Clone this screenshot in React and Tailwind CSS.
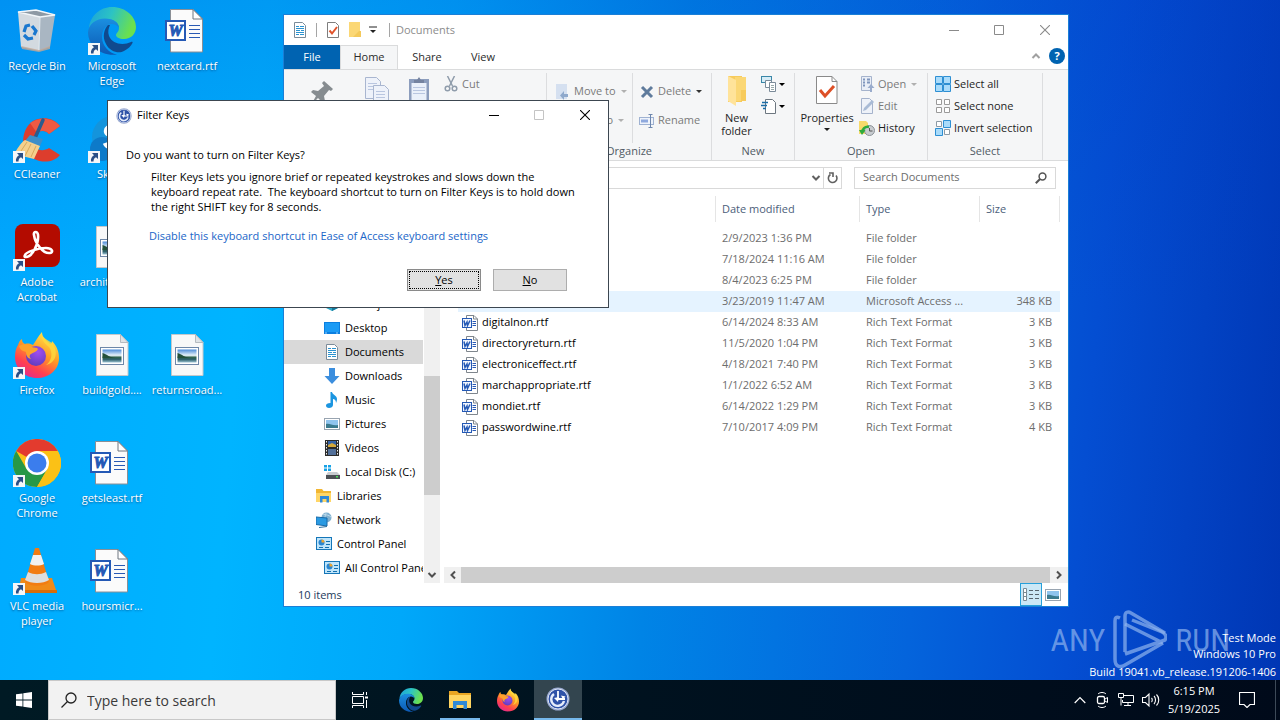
import { useState } from "react";

// ---------- data ----------

const DESKTOP_ITEMS = [
  { name: "Recycle Bin", icon: "recycle", place: "col-start-1 row-start-1" },
  { name: "CCleaner", icon: "ccleaner", place: "col-start-1 row-start-2", shortcut: true },
  { name: "Adobe Acrobat", icon: "acrobat", place: "col-start-1 row-start-3", shortcut: true },
  { name: "Firefox", icon: "firefox", place: "col-start-1 row-start-4", shortcut: true },
  { name: "Google Chrome", icon: "chrome", place: "col-start-1 row-start-5", shortcut: true },
  { name: "VLC media player", icon: "vlc", place: "col-start-1 row-start-6", shortcut: true },
  { name: "Microsoft Edge", icon: "edge", place: "col-start-2 row-start-1", shortcut: true },
  { name: "Skype", icon: "skype", place: "col-start-2 row-start-2", shortcut: true },
  { name: "architectur...", icon: "picture", place: "col-start-2 row-start-3" },
  { name: "buildgold....", icon: "picture", place: "col-start-2 row-start-4" },
  { name: "getsleast.rtf", icon: "word", place: "col-start-2 row-start-5" },
  { name: "hoursmicr...", icon: "word", place: "col-start-2 row-start-6" },
  { name: "nextcard.rtf", icon: "word", place: "col-start-3 row-start-1" },
  { name: "returnsroad...", icon: "picture", place: "col-start-3 row-start-4" },
];

const NAV_ITEMS = [
  { name: "3D Objects", icon: "cube", deep: true },
  { name: "Desktop", icon: "desktop", deep: true },
  { name: "Documents", icon: "document", deep: true },
  { name: "Downloads", icon: "download", deep: true },
  { name: "Music", icon: "music", deep: true },
  { name: "Pictures", icon: "photo", deep: true },
  { name: "Videos", icon: "video", deep: true },
  { name: "Local Disk (C:)", icon: "disk", deep: true },
  { name: "Libraries", icon: "library" },
  { name: "Network", icon: "network" },
  { name: "Control Panel", icon: "panel" },
  { name: "All Control Panel Items", icon: "panel", deep: true },
];

const FILES = [
  { name: "", date: "2/9/2023 1:36 PM", type: "File folder", size: "" },
  { name: "", date: "7/18/2024 11:16 AM", type: "File folder", size: "" },
  { name: "", date: "8/4/2023 6:25 PM", type: "File folder", size: "" },
  { name: "", date: "3/23/2019 11:47 AM", type: "Microsoft Access ...", size: "348 KB", hover: true },
  { name: "digitalnon.rtf", date: "6/14/2024 8:33 AM", type: "Rich Text Format", size: "3 KB" },
  { name: "directoryreturn.rtf", date: "11/5/2020 1:04 PM", type: "Rich Text Format", size: "3 KB" },
  { name: "electroniceffect.rtf", date: "4/18/2021 7:40 PM", type: "Rich Text Format", size: "3 KB" },
  { name: "marchappropriate.rtf", date: "1/1/2022 6:52 AM", type: "Rich Text Format", size: "3 KB" },
  { name: "mondiet.rtf", date: "6/14/2022 1:29 PM", type: "Rich Text Format", size: "3 KB" },
  { name: "passwordwine.rtf", date: "7/10/2017 4:09 PM", type: "Rich Text Format", size: "4 KB" },
];

// ---------- app icons ----------

function EdgeIcon({ className }) {
  return (
    <svg viewBox="0 0 48 48" className={className}>
      <defs>
        <linearGradient id="edgeTop" x1="0" y1="0" x2="1" y2="0.3">
          <stop offset="0" stopColor="#1aa0dc" />
          <stop offset="0.5" stopColor="#2cc3c4" />
          <stop offset="1" stopColor="#6be04e" />
        </linearGradient>
        <linearGradient id="edgeLeft" x1="0" y1="0" x2="0" y2="1">
          <stop offset="0" stopColor="#1b8fe0" />
          <stop offset="1" stopColor="#0c59b4" />
        </linearGradient>
      </defs>
      <path d="M1 21C2 9 12 0 24 0c14 0 24 10 24 20 0 7-5 12-12 12-5 0-8-2-8-4s3-3 3-7c0-5-5-9-12-9C11 12 4 15 1 21z" fill="url(#edgeTop)" />
      <path d="M0 25C1 17 8 11.500 17 11.500c8 0 14 4 14 9.500-1-2-4-4-7-4-6 0-10 6-10 13 0 9 7 16 15 17.500C13 49.500 0 39 0 25z" fill="url(#edgeLeft)" />
      <path d="M20 18c-4 4-6 12-2 19 4 8 13 10 18 7 4-2 7-5 8.500-8 .5-1-.5-1.500-1.500-1-8 4-19 2-22-6-1.500-4-.5-8 1-11z" fill="#104a8e" />
    </svg>
  );
}

function FirefoxIcon({ className }) {
  return (
    <svg viewBox="0 0 48 48" className={className}>
      <defs>
        <linearGradient id="foxBody" x1="0.8" y1="0.1" x2="0.3" y2="1">
          <stop offset="0" stopColor="#ffe34a" />
          <stop offset="0.4" stopColor="#ff9a24" />
          <stop offset="0.75" stopColor="#ff4050" />
          <stop offset="1" stopColor="#e32b8c" />
        </linearGradient>
        <radialGradient id="foxGlobe" cx="0.6" cy="0.3" r="0.8">
          <stop offset="0" stopColor="#a14df0" />
          <stop offset="1" stopColor="#5a3bb8" />
        </radialGradient>
      </defs>
      <path d="M9 8c0 3 1 4 3 5 3-1 6 0 8 1 3-4 5-9 9-13 0 5 4 8 8 12 1 0 2-1 2-3 5 5 7 11 7 17 0 12-10 20-22 20S2 38 2 26c0-5 1-9 3-12 1-3 2-5 4-6z" fill="url(#foxBody)" />
      <circle cx="23" cy="25" r="10" fill="url(#foxGlobe)" />
      <path d="M6 15c5-3 9-2 13 1 2 1 5 0 6 2-1 3-7 4-8 6-1 1 0 3 1 4-4-1-5-4-5-7-3-1-6-2-7-6z" fill="#ffa22b" />
      <path d="M28 3c0 5 3 9 8 13 4 5 3 14-3 18 10-2 13-13 6-22-4-3-9-5-11-9z" fill="#ffd93d" opacity=".8" />
    </svg>
  );
}

function FilterKeysIcon({ className }) {
  return (
    <svg viewBox="0 0 24 24" className={className}>
      <circle cx="12" cy="12" r="11.500" fill="#98a8cf" />
      <circle cx="12" cy="12" r="10" fill="#2f52a8" stroke="#dde5f5" strokeWidth="1" />
      <path d="M8 7a6.500 6.500 0 1 0 10 7" fill="none" stroke="#e6edfb" strokeWidth="2.400" />
      <path d="M12 4v8h7" fill="none" stroke="#fff" strokeWidth="1.800" />
      <path d="M8 11l4 4 1-5z" fill="#fff" />
      <path d="M15 8.500l4.500 1-2.500 3z" fill="#fff" />
    </svg>
  );
}

function WordPage() {
  return (
    <svg viewBox="0 0 48 48" className="size-12">
      <path d="M7.500 2.500H30l9.500 9.500v33h-32z" fill="#fbfbfb" stroke="#8a8f96" />
      <path d="M30 2.500V12h9.500z" fill="#fff" stroke="#6f7680" />
      <path d="M26 18.500h11M26 22.500h11M26 26.500h11M26 30.500h11" stroke="#2a5ab4" />
      <rect x="2" y="13" width="21" height="21" fill="#2459b5" />
      <rect x="4" y="15" width="17" height="17" fill="#fff" />
      <text x="12.500" y="29" textAnchor="middle" fontFamily="Liberation Serif, serif" fontStyle="italic" fontWeight="700" fontSize="16" fill="#2459b5" stroke="#2459b5" strokeWidth="1">W</text>
    </svg>
  );
}

function PicturePage() {
  return (
    <svg viewBox="0 0 48 48" className="size-12">
      <defs>
        <linearGradient id="lake" x1="0" y1="0" x2="0" y2="1">
          <stop offset="0" stopColor="#4a8ad8" />
          <stop offset="0.45" stopColor="#e8f3fa" />
          <stop offset="0.6" stopColor="#33664f" />
          <stop offset="0.75" stopColor="#285a64" />
          <stop offset="1" stopColor="#9cc3d4" />
        </linearGradient>
      </defs>
      <path d="M8.500 3.500h24l7.500 8v33H8.500z" fill="#f8f8f8" stroke="#c3c8cc" />
      <path d="M32.500 3.500v8H40z" fill="#dfe3e6" stroke="#b5babf" />
      <rect x="12.500" y="16.500" width="23" height="17" fill="#fff" stroke="#6e87a8" />
      <rect x="14.500" y="18.500" width="19" height="13" fill="url(#lake)" />
      <path d="M14.500 22c4 1 8 5 13 5h-13z" fill="#23503a" />
    </svg>
  );
}

function AppIcon({ name }) {
  switch (name) {
    case "edge":
      return <EdgeIcon className="size-12" />;
    case "firefox":
      return <FirefoxIcon className="size-12" />;
    case "word":
      return <WordPage />;
    case "picture":
      return <PicturePage />;
    case "recycle":
      return (
        <svg viewBox="0 0 48 48" className="size-12">
          <path d="M5 5l18-2 20 5-17 2z" fill="#8d99a4" />
          <path d="M5 5l22 5-1 34-18-4z" fill="#d3dae0" />
          <path d="M27 10l15-2-5 32-11 4z" fill="#a9b6c2" />
          <path d="M5 5l18-2 19 5-15 2z" fill="none" stroke="#f2f6f9" strokeWidth="1.500" />
          <path d="M8 39l18 4 11-4v3l-11 3-17-3z" fill="#c6a894" opacity=".8" />
          <path d="M27 10l-1 33" stroke="#e8edf1" />
          <g fill="none" stroke="#1a78cf" strokeWidth="3.200">
            <path d="M11 25l2-6 4-1" />
            <path d="M19 19l4 5-2 4" />
            <path d="M20 31l-5 1-4-4" />
          </g>
        </svg>
      );
    case "ccleaner":
      return (
        <svg viewBox="0 0 48 48" className="size-12">
          <path d="M47 11L36 19c-3-4-11-4-14 1-3 4-3 9 0 12 3 4 10 4 14 1l11 7c-8 10-26 8-33-2C7 28 10 13 20 6c9-5 21-3 27 5z" fill="#dd3d2d" />
          <path d="M47 11L36 19c-3-4-9-4-12-1L17 8C27 1 41 3 47 11z" fill="#ef5a43" />
          <path d="M30 5l-8 18" stroke="#2a5c8e" strokeWidth="3.500" strokeLinecap="round" />
          <path d="M17 20l13 4-3 7-15-5z" fill="#3d8fc9" />
          <path d="M12 25l15 6-6 13-20-5c3-4 6-11 11-14z" fill="#f4d08d" />
          <path d="M14 27l-8 12M18 29l-6 12M23 31l-5 11" stroke="#d9a95c" />
        </svg>
      );
    case "acrobat":
      return (
        <svg viewBox="0 0 48 48" className="size-12">
          <rect x="2" y="1" width="45" height="43" rx="8" fill="#b30b00" />
          <path d="M13 34c6 0 13-13 12-22 0-4-5-4-4 0 1 8 9 19 16 18 4-1 2-5-4-5-8 0-20 4-21 7-1 2 0 2 1 2z" fill="none" stroke="#fff" strokeWidth="2.600" />
        </svg>
      );
    case "chrome":
      return (
        <svg viewBox="0 0 48 48" className="size-12">
          <circle cx="24" cy="24" r="24" fill="#fbc116" />
          <path d="M24 24L3.200 12A24 24 0 0 1 44.800 12z" fill="#e33b2e" />
          <path d="M3.200 12A24 24 0 0 0 24 48l10.400-18L24 24l-10.400 6z" fill="#279847" />
          <path d="M24 12h20.800A24 24 0 0 1 24 48l10.400-18z" fill="#fbc116" />
          <circle cx="24" cy="24" r="12" fill="#fff" />
          <circle cx="24" cy="24" r="9.500" fill="#3b7ded" />
        </svg>
      );
    case "vlc":
      return (
        <svg viewBox="0 0 48 48" className="size-12">
          <path d="M8 31h31l5 15H5z" fill="#f08a18" />
          <path d="M5 43h39v3H5z" fill="#d86d07" />
          <path d="M22 1h4l10 34c-5 5-19 5-24 0z" fill="#f27c12" />
          <path d="M20 8h8l3 9c-4 2-10 2-14 0z" fill="#f1f1f1" />
          <path d="M15 25c6 3 12 3 18 0l3 8c-6 4-18 4-24 0z" fill="#dedede" />
        </svg>
      );
    default:
      return (
        <svg viewBox="0 0 48 48" className="size-12">
          <circle cx="25" cy="22" r="21" fill="#1494dc" />
          <circle cx="14" cy="34" r="12" fill="#0d7ac9" />
          <path d="M32 15c-2-5-14-5-14 1s14 5 14 11-13 7-15 1" fill="none" stroke="#fff" strokeWidth="4.500" />
        </svg>
      );
  }
}

function ShortcutArrow() {
  return (
    <svg viewBox="0 0 12 12" className="absolute bottom-0 left-0 size-3">
      <rect width="12" height="12" fill="#f4f6f8" />
      <path d="M4 2h6v6L8 6.200C6 7 5.500 8.500 5.500 10.500H3C2.500 7.500 4 5.500 6 4.200z" fill="#2b4f86" />
    </svg>
  );
}

// ---------- small explorer icons ----------

function SmallIcon({ name }) {
  const shapes = {
    cube: (
      <>
        <path d="M8 1l7 3.500v7L8 15l-7-3.500v-7z" fill="#2fa9c9" />
        <path d="M8 8l7-3.500v7L8 15z" fill="#15799b" />
      </>
    ),
    desktop: (
      <>
        <rect x="0" y="2" width="16" height="12" fill="#0b7fe0" />
        <rect x="1" y="3" width="14" height="9" fill="#1b9bf5" />
        <path d="M1 13h14" stroke="#9cd4ff" strokeDasharray="2 9" />
      </>
    ),
    document: (
      <>
        <path d="M2.500.5h8l3 3v12h-11z" fill="#fff" stroke="#7b8b99" />
        <path d="M4 4.500h3M8 4.500h4M4 6.500h8M4 8.500h4M9 8.500h3M4 10.500h8M4 12.500h3M8 12.500h4" stroke="#2a93d0" />
      </>
    ),
    download: <path d="M5 0h6v8h4.500L8 16 .5 8H5z" fill="#3b8ede" />,
    music: <path d="M8 0c.5 3 5 3.500 5 7 0 1.500-.5 3-1 4 0-3-1.500-4-3-4v6c0 2-2 3-4 3s-3-1-3-2.500S3.500 11 6.500 11V0z" fill="#1b95e0" />,
    photo: (
      <>
        <rect x=".5" y="2.500" width="15" height="11" fill="#fff" stroke="#98a4b0" />
        <rect x="2" y="4" width="12" height="8" fill="#8fc4ee" />
        <path d="M2 8c4-1 6 2 12 1v3H2z" fill="#3a7a8e" />
      </>
    ),
    video: (
      <>
        <rect x="1" y="0" width="14" height="16" fill="#2b2b2b" />
        <path d="M2.500 1v14M13.500 1v14" stroke="#f0f0f0" strokeDasharray="1.500 1.500" />
        <rect x="4" y="1" width="8" height="6" fill="#3463a8" />
        <rect x="4" y="9" width="8" height="6" fill="#52709a" />
        <path d="M4 5l4-2 4 2v2H4z" fill="#d5a93a" />
      </>
    ),
    disk: (
      <>
        <path d="M0 1h3v2.500H0zM4 1h3v2.500H4zM0 4.500h3V7H0zM4 4.500h3V7H4z" fill="#17a2e6" />
        <path d="M4 8h9l3 3H2z" fill="#c8ccd0" />
        <rect x="2" y="11" width="14" height="4" fill="#4b5055" />
        <rect x="12" y="12" width="2" height="1.500" fill="#4be05b" />
      </>
    ),
    library: (
      <>
        <path d="M0 1h6l1.500 2H15v11H0z" fill="#f2b632" />
        <path d="M0 5h15v9H0z" fill="#ffd667" />
        <path d="M4 8h9v6.500h-2.500V11h-4v3.500H4z" fill="#2f88d8" />
      </>
    ),
    network: (
      <>
        <circle cx="10.500" cy="5.500" r="5" fill="#7fb0d0" />
        <path d="M7 2c3 1 6 1 8 3M10.500.5c-2 3-2 7 0 10" fill="none" stroke="#bcd9ea" />
        <path d="M0 5l11 1v8L0 12.500z" fill="#2a9ae2" stroke="#1769a8" />
        <path d="M3 15.500l8-1" stroke="#2f6f9d" />
      </>
    ),
    panel: (
      <>
        <rect x=".5" y="1.500" width="15" height="12" fill="#bfe5fb" stroke="#1576b8" />
        <circle cx="5.500" cy="6.500" r="3" fill="#2a86d1" />
        <path d="M5.500 6.500V3.500a3 3 0 0 1 3 3z" fill="#f1a52d" />
        <path d="M10 5.500h4M10 8.500h4M3 11.500h4M9 11.500h4" stroke="#1270af" />
      </>
    ),
    rtf: (
      <>
        <path d="M4.500.5h7.500l3.500 3.500v11.500h-11z" fill="#fff" stroke="#7f868d" />
        <path d="M11.500.5V4h4" fill="none" stroke="#7f868d" />
        <path d="M10.500 6.500H14M10.500 8.500H14M10.500 10.500H14" stroke="#2a5ab4" />
        <rect x="0" y="3" width="10" height="10" fill="#2459b5" />
        <rect x="1" y="4" width="8" height="8" fill="#f2f6fd" />
        <path d="M2 5.500l1 5L5 7l.5 3.500L8 5.500" fill="none" stroke="#2459b5" strokeWidth="1.500" />
      </>
    ),
    check: (
      <>
        <path d="M2.500.5h8l3 3v12h-11z" fill="#fff" stroke="#7e7e7e" />
        <path d="M4.500 8.500l2.500 3 5-6.500" fill="none" stroke="#e0532b" strokeWidth="2" />
      </>
    ),
    folder: (
      <>
        <path d="M2 0h11v15H2z" fill="#fbd775" />
        <path d="M12 9h2v6H6z" fill="#f4c95a" />
      </>
    ),
    cut: (
      <g fill="none" stroke="#8f9cab" strokeWidth="1.500">
        <path d="M4.500 0l5 10M11.500 0l-5 10" />
        <circle cx="4.500" cy="12.500" r="2.300" />
        <circle cx="11.500" cy="12.500" r="2.300" />
      </g>
    ),
    move: (
      <>
        <rect x="1" y="0" width="11" height="15" fill="#d5e0f0" />
        <path d="M13 10H9V7l-4 4.500L9 16v-3h4z" fill="#8fa9cc" />
      </>
    ),
    remove: <path d="M3 3l10 10M13 3L3 13" stroke="#5f7b9c" strokeWidth="3" />,
    rename: (
      <>
        <rect x=".5" y="4.500" width="14" height="7" fill="#eef3fb" stroke="#9fb2d2" />
        <rect x="2" y="6.500" width="7" height="3" fill="#8fa9dd" />
        <path d="M11.500 2v12M9.500 1.500h4M9.500 14.500h4" stroke="#6d86ad" />
      </>
    ),
    open: (
      <>
        <path d="M2.500.5h10v14h-10z" fill="#e9eef7" stroke="#a5b3cc" />
        <path d="M4 3.500h2M4 6.500h2M4 9.500h2M8 3.500h3M8 6.500h3" stroke="#7f95bd" strokeWidth="2" />
        <path d="M11 16v-4H8.500L12 8l3.500 4H13v4z" fill="#9aaccc" />
      </>
    ),
    edit: (
      <>
        <path d="M2.500.5h8l3 3v12h-11z" fill="#eef2f9" stroke="#a5b3cc" />
        <path d="M4 13l1-3 8-8 2 2-8 8z" fill="#a9bbd6" />
      </>
    ),
    history: (
      <>
        <path d="M0 1h7l2 2v11H0z" fill="#f7da6a" />
        <circle cx="10.500" cy="10.500" r="5" fill="#c8ccd0" stroke="#8a9096" />
        <path d="M10.500 8v3h3" fill="none" stroke="#555" />
        <path d="M3 13c0-4 3-7 7-6" fill="none" stroke="#2eab3c" strokeWidth="2.500" />
        <path d="M0 10h6.500L3 15z" fill="#2eab3c" />
      </>
    ),
    selectAll: <path d="M.5.500h7v7h-7zM8.500.500h7v7h-7zM.5 8.500h7v7h-7zM8.500 8.500h7v7h-7z" fill="#a9dbfa" stroke="#2d8fd3" />,
    selectNone: <path d="M1.500 1.500h5v5h-5zM9.500 1.500h5v5h-5zM1.500 9.500h5v5h-5zM9.500 9.500h5v5h-5z" fill="#fff" stroke="#9a9a9a" />,
    invert: (
      <>
        <path d="M1.500 1.500h5v5h-5zM9.500 9.500h5v5h-5z" fill="#fff" stroke="#8d9aa5" />
        <path d="M8.500.5h7v7h-7zM.5 8.500h7v7h-7z" fill="#a9dbfa" stroke="#2d8fd3" />
      </>
    ),
    newItem: (
      <>
        <rect x=".5" y=".5" width="10" height="6" fill="#d7edf7" stroke="#3a87a8" />
        <path d="M4.500 4.500h6v7h-6z" fill="#fff" stroke="#7b8b99" />
        <path d="M8.500 6.500h6v9h-6z" fill="#fff" stroke="#7b8b99" />
        <path d="M10 9.500h3M10 11.500h3M10 13.500h3" stroke="#99aaaa" />
      </>
    ),
    easyAccess: (
      <>
        <path d="M4.500 1.500h7l3 3v11h-10z" fill="#fff" stroke="#6d7780" />
        <path d="M1 4.500h6M0 7.500h6M2 10.500h3" stroke="#1c6ea8" strokeWidth="1.500" />
      </>
    ),
  };
  return (
    <svg viewBox="0 0 16 16" className="size-4 shrink-0">
      {shapes[name]}
    </svg>
  );
}

function Caret({ className }) {
  return (
    <svg viewBox="0 0 6 3" className={`h-[3px] w-1.5 shrink-0 ${className ?? ""}`}>
      <path d="M0 0h6L3 3z" fill="currentColor" />
    </svg>
  );
}

function Chevron({ className }) {
  return (
    <svg viewBox="0 0 10 10" className={`size-2.5 shrink-0 ${className}`}>
      <path d="M1.500 3L5 6.500 8.500 3" fill="none" stroke="currentColor" strokeWidth="2" />
    </svg>
  );
}

// ---------- window controls ----------

function WindowButtons({ color, maxColor, title }) {
  return (
    <div className="ml-auto flex h-full pb-px">
      <button aria-label={`Minimize ${title}`} className={`grid w-[45px] place-items-center ${color}`}>
        <svg viewBox="0 0 10 10" className="size-2.5"><path d="M0 5.500h10" stroke="currentColor" /></svg>
      </button>
      <button aria-label={`Maximize ${title}`} className={`grid w-[45px] place-items-center ${maxColor}`}>
        <svg viewBox="0 0 10 10" className="size-2.5"><path d="M.5.5h9v9h-9z" fill="none" stroke="currentColor" /></svg>
      </button>
      <button aria-label={`Close ${title}`} className={`grid w-[47px] place-items-center ${color}`}>
        <svg viewBox="0 0 10 10" className="size-2.5"><path d="M0 0l10 10M10 0L0 10" stroke="currentColor" strokeWidth="1.100" /></svg>
      </button>
    </div>
  );
}

// ---------- ribbon ----------

function RibbonGroup({ label, width, children }) {
  return (
    <div className={`flex shrink-0 flex-col border-r border-[#dcdddf] ${width}`}>
      <div className="flex flex-1">{children}</div>
      <div className="h-[17px] text-center leading-4 text-[#505a64]">{label}</div>
    </div>
  );
}

function RibbonItem({ icon, label, height, dim, caret }) {
  return (
    <button className={`flex items-center gap-[3px] whitespace-nowrap ${height} ${dim ? "text-[#7a7a7a]" : "text-[#1e1e1e]"}`}>
      <SmallIcon name={icon} />
      {label}
      {caret && <Caret className={`ml-0.5 ${caret}`} />}
    </button>
  );
}

function Ribbon() {
  return (
    <div className="flex h-[92px] border-y border-[#dadbdc] bg-[#f5f6f7] pt-[3px] pl-px">
      <RibbonGroup label="Clipboard" width="w-[262px]">
        <button aria-label="Pin to Quick access" className="flex w-[74px] justify-center pt-1.5">
          <svg viewBox="0 0 32 32" className="size-8">
            <path d="M16 4l2-2 9 8-2 2-2-1-5 6 1 5-2 2-5-5-7 7 5-9-5-4 2-2 5 1 6-5z" fill="#868c90" />
          </svg>
        </button>
        <button aria-label="Copy" className="flex w-9 justify-center pt-1">
          <svg viewBox="0 0 26 30" className="h-[30px] w-[26px]">
            <path d="M1.500.500h11l4 4v17h-15z" fill="#eef2fa" stroke="#a9b6d0" />
            <path d="M4 6.500h9M4 9.500h9M4 12.500h9" stroke="#b9c6e0" />
            <path d="M9.500 8.500h11l4 4v17h-15z" fill="#eef2fa" stroke="#a9b6d0" />
            <path d="M12 14.500h9M12 17.500h9M12 20.500h9" stroke="#b9c6e0" />
          </svg>
        </button>
        <button aria-label="Paste" className="flex w-12 justify-center pt-1">
          <svg viewBox="0 0 22 30" className="h-[30px] w-[22px]">
            <rect x="1" y="2" width="20" height="27" fill="#8c9dbd" />
            <rect x="3.500" y="6" width="15" height="20" fill="#eaf0fa" />
            <path d="M6 3h3l2-3 2 3h3v3H6z" fill="#7583a0" />
            <path d="M5 10.500h12M5 13.500h12M5 16.500h12" stroke="#b9c6e0" />
          </svg>
        </button>
        <div className="flex flex-col">
          <RibbonItem icon="cut" label="Cut" height="h-[22px]" dim />
        </div>
      </RibbonGroup>

      <RibbonGroup label="Organize" width="w-[165px]">
        <div className="flex w-[86px] flex-col border-r border-[#dcdddf] pt-1 pl-2">
          <RibbonItem icon="move" label="Move to" height="h-[29px]" dim caret="text-[#b0b0b0]" />
          <RibbonItem icon="move" label="Copy to" height="h-[29px]" dim caret="text-[#b0b0b0]" />
        </div>
        <div className="flex flex-col pt-1 pl-1.5">
          <RibbonItem icon="remove" label="Delete" height="h-[29px]" dim caret="text-[#333]" />
          <RibbonItem icon="rename" label="Rename" height="h-[29px]" dim />
        </div>
      </RibbonGroup>

      <RibbonGroup label="New" width="w-[83px]">
        <button className="flex w-[49px] flex-col items-center pt-0.5 leading-[13px] text-[#1e1e1e]">
          <svg viewBox="0 0 22 32" className="mb-1 h-[32px] w-[22px]">
            <path d="M2 1h14v26H2z" fill="#f7cb5c" />
            <path d="M9 2h11v24H9z" fill="#fbd775" />
            <path d="M2 1l8 4v26l-8-5z" fill="#ffe39a" />
            <path d="M15 15h5v11h-5z" fill="#f7cb5c" />
          </svg>
          New folder
        </button>
        <div className="flex flex-col">
          <button aria-label="New item" className="flex h-[22px] items-center gap-0.5"><SmallIcon name="newItem" /><Caret /></button>
          <button aria-label="Easy access" className="flex h-[22px] items-center gap-0.5"><SmallIcon name="easyAccess" /><Caret /></button>
        </div>
      </RibbonGroup>

      <RibbonGroup label="Open" width="w-[133px]">
        <button className="flex w-[64px] flex-col items-center pt-0.5 leading-[13px] text-[#1e1e1e]">
          <svg viewBox="0 0 22 32" className="mb-1 h-[32px] w-[22px]">
            <path d="M.500 1.500h15.500l5 5v22H.500z" fill="#fff" stroke="#8a8a8a" />
            <path d="M16 1.500v5h5" fill="none" stroke="#8a8a8a" />
            <path d="M4 15l5 6 9-10" fill="none" stroke="#dd5027" strokeWidth="3" />
          </svg>
          Properties
          <Caret className="mt-1" />
        </button>
        <div className="flex flex-col">
          <RibbonItem icon="open" label="Open" height="h-[22px]" dim caret="text-[#b0b0b0]" />
          <RibbonItem icon="edit" label="Edit" height="h-[22px]" dim />
          <RibbonItem icon="history" label="History" height="h-[22px]" />
        </div>
      </RibbonGroup>

      <RibbonGroup label="Select" width="w-[115px]">
        <div className="flex flex-col pl-[7px]">
          <RibbonItem icon="selectAll" label="Select all" height="h-[22px]" />
          <RibbonItem icon="selectNone" label="Select none" height="h-[22px]" />
          <RibbonItem icon="invert" label="Invert selection" height="h-[22px]" />
        </div>
      </RibbonGroup>
    </div>
  );
}

// ---------- explorer ----------

function NavPane() {
  return (
    <nav className="flex w-[156px] shrink-0 overflow-hidden">
      <ul className="flex flex-1 flex-col justify-end overflow-hidden pr-px pb-[3px]">
        {NAV_ITEMS.map((item) => (
          <li key={item.name}>
            <a
              href="#"
              className={`flex h-6 items-center gap-[5px] overflow-hidden whitespace-nowrap text-black ${item.deep ? "pl-10" : "pl-8"} ${item.name === "Documents" ? "bg-[#d9d9d9]" : ""}`}
            >
              <SmallIcon name={item.icon} />
              {item.name}
            </a>
          </li>
        ))}
      </ul>
      <div className="flex w-4 shrink-0 flex-col bg-[#f0f0f0]">
        <div className="mt-auto mb-[72px] h-[119px] bg-[#cdcdcd]" />
        <div className="grid h-4 place-items-center"><Chevron className="text-[#505050]" /></div>
      </div>
    </nav>
  );
}

function FileList() {
  const th = "p-0 pb-1.5 text-left font-normal text-[#4c607a]";
  const head = "flex h-[26px] items-center border-r border-[#e5e5e5] pl-1.5";
  return (
    <table className="ml-3.5 w-[602px] table-fixed border-collapse whitespace-nowrap text-[#6d6d6d]">
      <colgroup>
        <col className="w-[258px]" />
        <col className="w-36" />
        <col className="w-[120px]" />
        <col className="w-20" />
      </colgroup>
      <thead>
        <tr>
          <th aria-label="Name" className={th}><div className={head} /></th>
          <th className={th}><div className={head}>Date modified</div></th>
          <th className={th}><div className={head}>Type</div></th>
          <th className={th}><div className={head}>Size</div></th>
        </tr>
      </thead>
      <tbody>
        {FILES.map((file) => (
          <tr key={file.date} className={`h-[21px] ${file.hover ? "bg-[#e5f3ff]" : ""}`}>
            <td className="p-0 pl-1 text-black">
              {file.name && (
                <span className="flex items-center gap-1">
                  <SmallIcon name="rtf" />
                  {file.name}
                </span>
              )}
            </td>
            <td className="p-0 pl-1.5">{file.date}</td>
            <td className="p-0 pl-1.5">{file.type}</td>
            <td className="p-0 pr-2 text-right">{file.size}</td>
          </tr>
        ))}
      </tbody>
    </table>
  );
}

function Explorer() {
  return (
    <section aria-label="Documents" className="absolute top-3.5 left-[283px] flex w-[786px] flex-col border border-[#1b7fd6] bg-white">
      <header className="flex h-[30px] items-center pl-2 text-[#8c8c8c]">
        <SmallIcon name="document" />
        <span className="mx-2 h-3.5 w-px bg-[#a5a5a5]" />
        <SmallIcon name="check" />
        <span className="w-1.5" />
        <SmallIcon name="folder" />
        <svg viewBox="0 0 8 8" className="mr-3 ml-1.5 size-2"><path d="M0 1h8" stroke="#222" /><path d="M1 4h6L4 7z" fill="#222" /></svg>
        <span className="mr-1.5 h-3.5 w-px bg-[#a5a5a5]" />
        Documents
        <WindowButtons color="text-[#8a8a8a]" maxColor="text-[#8a8a8a]" title="Documents" />
      </header>

      <div className="flex h-6 items-stretch text-[#2b2b2b]">
        <button className="w-14 bg-[#0063b1] text-white">File</button>
        <button className="w-[58px] border-x border-t border-[#dadbdc] bg-[#f5f6f7]">Home</button>
        <button className="w-[58px]">Share</button>
        <button className="w-[54px]">View</button>
        <div className="ml-auto flex items-center gap-2 pr-[3px] pb-0.5">
          <Chevron className="rotate-180 text-[#a0a0a0]" />
          <button aria-label="Help" className="grid size-4 place-items-center rounded-full bg-[#0063b1] font-bold text-white">?</button>
        </div>
      </div>

      <Ribbon />

      <div className="flex h-[35px] items-center gap-3 pr-3 pb-0.5 pl-[100px]">
        <div className="flex h-[22px] flex-1 items-center justify-end border border-[#d9d9d9]">
          <Chevron className="mr-0.5 text-[#606060]" />
          <button aria-label="Refresh" className="grid h-full w-[18px] place-items-center border-l border-[#d9d9d9]">
            <svg viewBox="0 0 12 12" className="size-3">
              <path d="M3.500 2.500A4.300 4.300 0 1 0 9 3.500" fill="none" stroke="#606060" strokeWidth="1.600" />
              <path d="M2 1h4v4" fill="none" stroke="#606060" strokeWidth="1.600" />
            </svg>
          </button>
        </div>
        <label className="flex h-[22px] w-[202px] items-center border border-[#d9d9d9] pr-2 pl-2">
          <input aria-label="Search Documents" placeholder="Search Documents" className="min-w-0 flex-1 bg-transparent outline-none placeholder:text-[#6d6d6d]" />
          <svg viewBox="0 0 12 12" className="size-3">
            <circle cx="7.500" cy="4.500" r="3.400" fill="none" stroke="#555" strokeWidth="1.500" />
            <path d="M5 7L.8 11.200" stroke="#555" strokeWidth="2" />
          </svg>
        </label>
      </div>

      <div className="flex h-[387px]">
        <NavPane />
        <div className="flex flex-1 flex-col pl-1">
          <FileList />
          <div className="mt-auto flex h-4 items-center bg-[#f0f0f0]">
            <span className="grid w-[17px] place-items-center"><Chevron className="rotate-90 text-[#505050]" /></span>
            <span className="h-full flex-1 bg-[#cdcdcd]" />
            <span className="grid w-[18px] place-items-center"><Chevron className="-rotate-90 text-[#505050]" /></span>
          </div>
        </div>
      </div>

      <footer className="flex h-[23px] items-center pr-1 pl-3.5 text-[#1b3a5c]">
        <span className="pt-0.5">10 items</span>
        <button aria-label="Details view" className="ml-auto grid h-full w-[22px] place-items-center border border-[#26a0da] bg-[#cbe8f6]">
          <svg viewBox="0 0 16 13" className="h-[13px] w-4">
            <path d="M.5.500h3v12h-3zM.5 4.500h3M.5 8.500h3" fill="#fff" stroke="#7a8a94" />
            <path d="M6 2.500h4M12 2.500h4M6 6.500h4M12 6.500h4M6 10.500h4M12 10.500h4" stroke="#56646e" />
          </svg>
        </button>
        <button aria-label="Large thumbnails" className="grid w-[22px] place-items-center"><SmallIcon name="photo" /></button>
      </footer>
    </section>
  );
}

// ---------- dialog ----------

function FilterKeysDialog({ onClose }) {
  return (
    <section role="dialog" aria-label="Filter Keys" className="absolute top-[100px] left-[107px] w-[502px] border border-[#3c4650] bg-white pb-4 text-black">
      <header className="flex h-[29px] items-center gap-[5px] pl-2">
        <FilterKeysIcon className="size-4" />
        Filter Keys
        <WindowButtons color="text-black" maxColor="text-[#c4c4c4]" title="Filter Keys" />
      </header>
      <div className="pt-[17px] pl-[18px] leading-[15px]">
        <p>Do you want to turn on Filter Keys?</p>
        <p className="pt-[7px] pl-[25px] whitespace-pre">
          {"Filter Keys lets you ignore brief or repeated keystrokes and slows down the\nkeyboard repeat rate.  The keyboard shortcut to turn on Filter Keys is to hold down\nthe right SHIFT key for 8 seconds."}
        </p>
        <a href="#" className="mt-3.5 ml-[23px] block text-[#1a66c8]">
          Disable this keyboard shortcut in Ease of Access keyboard settings
        </a>
      </div>
      <div className="flex justify-end gap-3 pt-[26px] pr-[41px]">
        <button onClick={onClose} className="h-[22px] w-[74px] border border-[#8a8a8a] bg-[#e1e1e1] p-px">
          <span className="grid h-full place-items-center border border-dotted border-black"><span><u>Y</u>es</span></span>
        </button>
        <button onClick={onClose} className="h-[22px] w-[74px] border border-[#adadad] bg-[#e1e1e1]"><u>N</u>o</button>
      </div>
    </section>
  );
}

// ---------- desktop & taskbar ----------

function DesktopIcons() {
  return (
    <ul className="grid w-56 grid-cols-[74px_74px_74px] grid-rows-[repeat(6,108px)] gap-x-px text-white">
      {DESKTOP_ITEMS.map((item) => (
        <li key={item.name} className={`flex flex-col items-center pt-[7px] ${item.place}`}>
          <span className="relative">
            <AppIcon name={item.icon} />
            {item.shortcut && <ShortcutArrow />}
          </span>
          <span className="mt-[3px] max-w-[74px] text-center leading-[15px] [text-shadow:0_1px_2px_rgba(0,40,90,0.6)]">{item.name}</span>
        </li>
      ))}
    </ul>
  );
}

function Watermark() {
  return (
    <div className="absolute right-1 bottom-0 flex flex-col items-end text-white">
      <div className="absolute right-[46px] bottom-2.5 flex items-center gap-2 font-['Roboto_Condensed','Roboto',sans-serif] text-[32px] leading-[60px] text-[#8fb4ee]/70">
        ANY
        <svg viewBox="0 0 54 60" className="h-[60px] w-[54px]" fill="none" stroke="currentColor" strokeWidth="3.500" strokeLinejoin="round">
          <path d="M7 8c-4-2-5 0-5 3v38c0 8 5 9 10 6l38-22" />
          <path d="M12 42V6c0-4 3-5 6-3l34 20" />
          <path d="M12 14l38 19M12 44l40-14c2-3 1-6-3-8L19 10" />
        </svg>
        RUN
      </div>
      <span className="relative leading-4">Test Mode</span>
      <span className="relative leading-4">Windows 10 Pro</span>
      <span className="relative pt-0.5 leading-4">Build 19041.vb_release.191206-1406</span>
    </div>
  );
}

function Taskbar() {
  return (
    <footer className="flex h-10 items-stretch bg-linear-to-r from-[#001a24] to-[#000a1a] text-white">
      <button aria-label="Start" className="grid w-12 place-items-center">
        <svg viewBox="0 0 16 16" className="size-4"><path d="M0 2.300l6.500-.9v6.200H0zM7.300 1.300L16 0v7.600H7.300zM0 8.400h6.500v6.200L0 13.700zM7.300 8.400H16V16l-8.700-1.200z" fill="#fff" /></svg>
      </button>
      <label className="flex w-72 items-center gap-2.5 border border-[#c8c8c8] bg-[#f2f2f2] pl-3 text-black">
        <svg viewBox="0 0 16 16" className="size-4">
          <circle cx="10" cy="6" r="5" fill="none" stroke="#222" strokeWidth="1.300" />
          <path d="M6.500 9.500L.5 15.500" stroke="#222" strokeWidth="1.300" />
        </svg>
        <input aria-label="Type here to search" placeholder="Type here to search" className="min-w-0 flex-1 bg-transparent text-[14px] outline-none placeholder:text-[#3a3a3a]" />
      </label>
      <button aria-label="Task view" className="grid w-12 place-items-center">
        <svg viewBox="0 0 16 16" className="size-4" fill="none" stroke="#fff">
          <path d="M.5 4.500h11v7H.5zM.5 0v2.500h11V0M.5 16v-2.500h11V16M14.500 0v3M14.500 8v8" />
          <path d="M13 5.500h3" strokeWidth="2" />
        </svg>
      </button>
      <button aria-label="Microsoft Edge" className="grid w-[54px] place-items-center"><EdgeIcon className="size-6" /></button>
      <button aria-label="File Explorer" className="mx-0.5 grid w-10 place-items-center border-b-2 border-[#76b9ed] pt-0.5">
        <svg viewBox="0 0 22 20" className="h-5 w-[22px]">
          <path d="M0 1h8l2 2h12v15H0z" fill="#e9a623" />
          <path d="M0 5h22v13H0z" fill="#ffd561" />
          <path d="M4 11h14v8h-3.500v-4h-7v4H4z" fill="#2f8ad6" />
        </svg>
      </button>
      <button aria-label="Firefox" className="grid w-[52px] place-items-center"><FirefoxIcon className="size-6" /></button>
      <button aria-label="Filter Keys" className="grid w-12 place-items-center border-b-2 border-[#76b9ed] bg-[#33454f]"><FilterKeysIcon className="size-6" /></button>

      <div className="ml-auto flex items-center gap-1">
        <div className="flex items-center gap-2">
          <svg viewBox="0 0 12 8" className="h-2 w-3"><path d="M.7 7L6 1.500 11.300 7" fill="none" stroke="#fff" strokeWidth="1.200" /></svg>
          <svg viewBox="0 0 16 16" className="size-4" fill="none" stroke="#fff">
            <rect x="3.500" y="4.500" width="7" height="7" rx="1.500" strokeWidth="1.300" />
            <path d="M11 7l2.500-1.500v5L11 9M4 2c2-2 6-2 8 0M4 14c2 2 6 2 8 0" />
          </svg>
          <svg viewBox="0 0 16 16" className="size-4" fill="none" stroke="#fff">
            <path d="M6 3.500h9.500v7H4.500V8M10 10.500v3M6 13.500h7M.5 1.500h5v4h-5zM3 5.500v8" />
          </svg>
          <svg viewBox="0 0 18 16" className="h-4 w-[18px]" fill="none" stroke="#fff" strokeWidth="1.100">
            <path d="M.5 5.500h3L7 2v12L3.500 10.500h-3zM9.500 6c1 1 1 3 0 4M12 4c2 2 2 6 0 8M14.500 2.500c3 3 3 8 0 11" />
          </svg>
        </div>
        <time className="w-[60px] text-center leading-[18px]">6:15 PM 5/19/2025</time>
        <button aria-label="Notifications" className="grid w-[38px] place-items-center">
          <svg viewBox="0 0 16 16" className="size-4"><path d="M.5.5h15v12H11L8 15.500 5 12.500H.5z" fill="none" stroke="#fff" strokeWidth="1.200" /></svg>
        </button>
        <span className="mr-1 ml-[5px] h-10 w-px bg-[#3d4a58]" />
      </div>
    </footer>
  );
}

export default function App() {
  const [dialogOpen, setDialogOpen] = useState(true);

  return (
    <div className="flex min-h-screen flex-col overflow-hidden bg-[#0063b1] font-['Open_Sans','Noto_Sans',sans-serif] text-[11px]">
      <main className="relative flex-1 bg-[linear-gradient(180deg,rgba(0,60,200,0.22)_0%,rgba(0,60,200,0)_45%),linear-gradient(95deg,#00aaff_0%,#00b4ff_20%,#00a8fa_34%,#0084e6_52%,#0464dc_72%,#044ed2_84%,#0036b4_100%)]">
        <DesktopIcons />
        <Watermark />
        <Explorer />
        {dialogOpen && <FilterKeysDialog onClose={() => setDialogOpen(false)} />}
      </main>
      <Taskbar />
    </div>
  );
}
